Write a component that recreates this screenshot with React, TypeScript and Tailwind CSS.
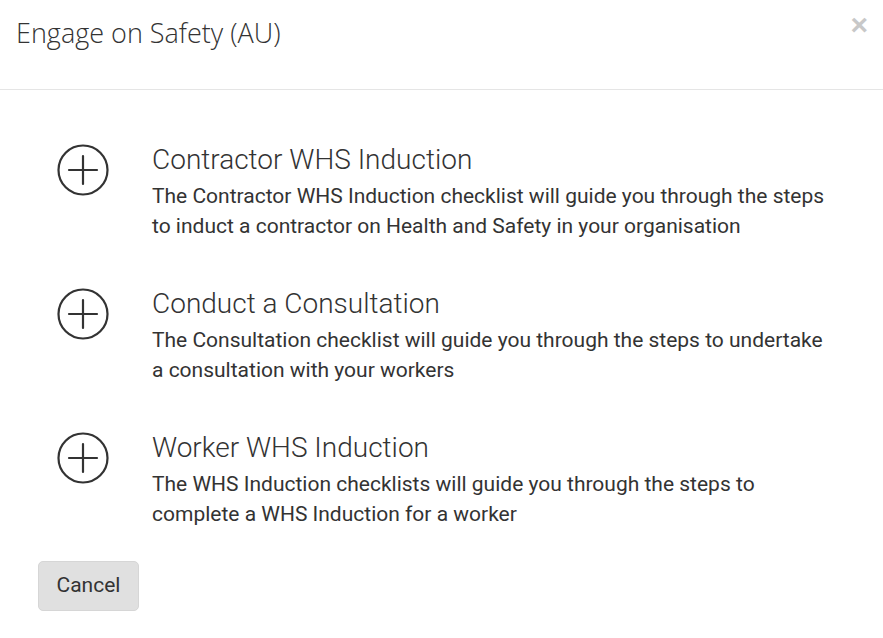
const items = [
  {
    title: "Contractor WHS Induction",
    body: "The Contractor WHS Induction checklist will guide you through the steps to induct a contractor on Health and Safety in your organisation",
  },
  {
    title: "Conduct a Consultation",
    body: "The Consultation checklist will guide you through the steps to undertake a consultation with your workers",
  },
  {
    title: "Worker WHS Induction",
    body: "The WHS Induction checklists will guide you through the steps to complete a WHS Induction for a worker",
  },
];

function PlusCircle() {
  return (
    <svg width="52" height="52" viewBox="0 0 52 52" fill="none" stroke="#333" strokeWidth="2.2" strokeLinecap="round">
      <circle cx="26" cy="26" r="24.5" />
      <path d="M26 12v28M12 26h28" />
    </svg>
  );
}

export default function App() {
  return (
    <div className="w-[883px] h-[638px] bg-white text-[#333] font-['Roboto',sans-serif] overflow-hidden">
      <div className="relative h-[90px] border-b border-[#e5e5e5] px-4 pt-[15px]">
        <h4 className="font-['Open_Sans',sans-serif] font-light text-[27px] leading-[36px] text-[#333]">
          Engage on Safety (AU)
        </h4>
        <button className="absolute right-[15px] top-[10px] text-[#c8c8c8] text-[30px] font-bold leading-none font-['Liberation_Sans',sans-serif]">
          ×
        </button>
      </div>
      <div className="pt-[55px] pl-[57px] pr-[53px] flex flex-col gap-[48px]">
        {items.map((it) => (
          <div key={it.title} className="flex">
            <div className="w-[95px] shrink-0 -mt-[1px]">
              <PlusCircle />
            </div>
            <div className="flex flex-col">
              <div className="font-light text-[28px] leading-[30px]">{it.title}</div>
              <p className="text-[21px] leading-[30px] mt-[6px]">{it.body}</p>
            </div>
          </div>
        ))}
      </div>
      <div className="pl-[38px] pt-[32px]">
        <button className="w-[101px] h-[50px] rounded-[5px] bg-[#e0e0e0] border border-[#d6d6d6] text-[21px] text-[#333]">
          Cancel
        </button>
      </div>
    </div>
  );
}
